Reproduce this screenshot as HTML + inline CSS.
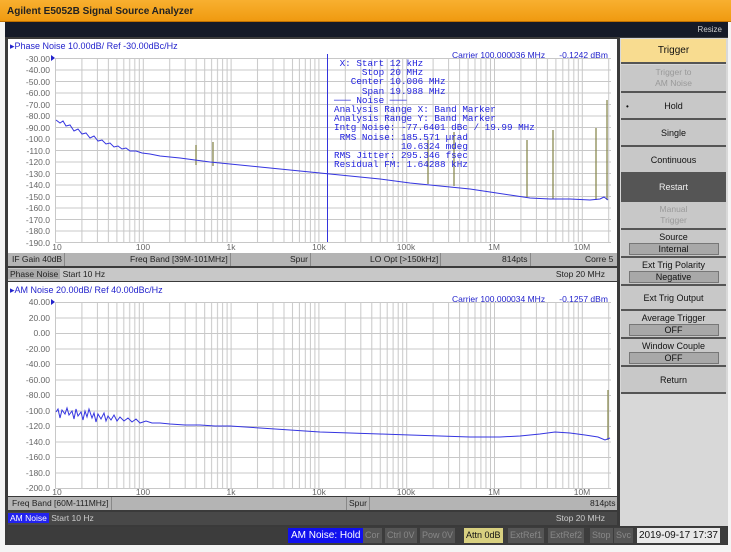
<!DOCTYPE html>
<html><head><meta charset="utf-8"><style>
*{margin:0;padding:0;box-sizing:border-box}
body{width:731px;height:552px;background:#f4f4f4;font-family:"Liberation Sans",sans-serif;position:relative;overflow:hidden;font-size:9px}
.a{position:absolute}
.title{left:0;top:0;width:731px;height:22px;background:linear-gradient(#f8b030,#f09a10);border-bottom:1px solid #c07000}
.title span{position:absolute;left:7px;top:6px;font-size:10px;font-weight:bold;color:#222}
.dark{left:5px;top:22px;width:723px;height:15px;background:#151a28;color:#ccc;font-size:8px;text-align:right;padding-right:6px;line-height:15px}
.frame{left:5px;top:37px;width:723px;height:508px;background:#3a3a3a}
.sb{background:#b4b4b4;color:#222;font-size:8.5px;line-height:13px;height:13px}
.sb span{position:absolute;top:0;border-right:1px solid #888;padding:0 2px}
.btn{position:absolute;left:621px;width:105px;background:#c8c8c8;border-bottom:2px solid #555;text-align:center;font-size:9px;color:#111;display:flex;flex-direction:column;justify-content:center;align-items:center}
.sub{width:90px;background:#a8a8a8;border:1px solid #777;line-height:10px;margin-top:1px}
.ann{font-family:"Liberation Mono",monospace;font-size:9.3px;color:#2222dd;line-height:9.2px;white-space:pre;left:334px;top:59px}
.bl{color:#2222cc}
</style></head><body>
<div class="a title"><span>Agilent E5052B Signal Source Analyzer</span></div>
<div class="a dark">Resize</div>
<div class="a frame"></div>
<div class="a" style="left:8px;top:39px;width:609px;height:214px;background:#fff"></div>
<div class="a" style="left:8px;top:282px;width:609px;height:214px;background:#fff"></div>
<div class="a bl" style="left:10px;top:41px;font-size:9px">▸Phase Noise 10.00dB/ Ref -30.00dBc/Hz</div>
<div class="a bl" style="left:452px;top:50px;font-size:8.5px">Carrier 100.000036 MHz &nbsp;&nbsp;&nbsp;&nbsp; -0.1242 dBm</div>
<div class="a bl" style="left:10px;top:285px;font-size:9px">▸AM Noise 20.00dB/ Ref 40.00dBc/Hz</div>
<div class="a bl" style="left:452px;top:294px;font-size:8.5px">Carrier 100.000034 MHz &nbsp;&nbsp;&nbsp;&nbsp; -0.1257 dBm</div>
<svg class="a" style="left:0;top:0" width="731" height="552">
<defs>
<pattern id="pv" x="55" y="0" width="87.8" height="552" patternUnits="userSpaceOnUse">
<g stroke="#c8c8c8" stroke-width="1"><line x1="0.5" y1="0" x2="0.5" y2="552"/><line x1="26.9" y1="0" x2="26.9" y2="552"/><line x1="42.4" y1="0" x2="42.4" y2="552"/><line x1="53.4" y1="0" x2="53.4" y2="552"/><line x1="61.9" y1="0" x2="61.9" y2="552"/><line x1="68.8" y1="0" x2="68.8" y2="552"/><line x1="74.7" y1="0" x2="74.7" y2="552"/><line x1="79.8" y1="0" x2="79.8" y2="552"/><line x1="84.3" y1="0" x2="84.3" y2="552"/></g></pattern>
<pattern id="ph1" x="0" y="58" width="731" height="11.5" patternUnits="userSpaceOnUse"><line x1="0" y1="0.5" x2="731" y2="0.5" stroke="#c8c8c8"/></pattern>
<pattern id="ph2" x="0" y="302" width="731" height="15.5" patternUnits="userSpaceOnUse"><line x1="0" y1="0.5" x2="731" y2="0.5" stroke="#c8c8c8"/></pattern>
</defs>
<rect x="55" y="58" width="556" height="184" fill="url(#pv)"/>
<rect x="55" y="58" width="556" height="185" fill="url(#ph1)"/>
<rect x="55" y="302" width="556" height="186" fill="url(#pv)"/>
<rect x="55" y="302" width="556" height="187" fill="url(#ph2)"/>
<g font-size="8.5" fill="#666" text-anchor="end" font-family="Liberation Sans">
<text x="50" y="62">-30.00</text><text x="50" y="73">-40.00</text><text x="50" y="85">-50.00</text><text x="50" y="96">-60.00</text><text x="50" y="108">-70.00</text><text x="50" y="119">-80.00</text><text x="50" y="131">-90.00</text><text x="50" y="142">-100.0</text><text x="50" y="154">-110.0</text><text x="50" y="165">-120.0</text><text x="50" y="177">-130.0</text><text x="50" y="188">-140.0</text><text x="50" y="200">-150.0</text><text x="50" y="211">-160.0</text><text x="50" y="223">-170.0</text><text x="50" y="234">-180.0</text><text x="50" y="246">-190.0</text>
<text x="50" y="305">40.00</text><text x="50" y="321">20.00</text><text x="50" y="336">0.00</text><text x="50" y="352">-20.00</text><text x="50" y="367">-40.00</text><text x="50" y="383">-60.00</text><text x="50" y="398">-80.00</text><text x="50" y="414">-100.0</text><text x="50" y="429">-120.0</text><text x="50" y="445">-140.0</text><text x="50" y="460">-160.0</text><text x="50" y="476">-180.0</text><text x="50" y="491">-200.0</text>
</g>
<g font-size="8.5" fill="#666" text-anchor="middle">
<text x="57" y="250">10</text><text x="143" y="250">100</text><text x="231" y="250">1k</text><text x="319" y="250">10k</text><text x="406" y="250">100k</text><text x="494" y="250">1M</text><text x="582" y="250">10M</text>
<text x="57" y="495">10</text><text x="143" y="495">100</text><text x="231" y="495">1k</text><text x="319" y="495">10k</text><text x="406" y="495">100k</text><text x="494" y="495">1M</text><text x="582" y="495">10M</text>
</g>
<path d="M51 55l4 3-4 3z M51 299l4 3-4 3z" fill="#2222cc"/>
<line x1="327.5" y1="54" x2="327.5" y2="242" stroke="#3333dd"/>
<g stroke="#8a8a50" stroke-width="1.3">
<line x1="196" y1="145" x2="196" y2="165"/><line x1="213" y1="142" x2="213" y2="166"/>
<line x1="428" y1="140" x2="428" y2="184"/><line x1="454" y1="132" x2="454" y2="186"/>
<line x1="527" y1="140" x2="527" y2="197"/><line x1="553" y1="130" x2="553" y2="199"/>
<line x1="596" y1="128" x2="596" y2="200"/><line x1="607" y1="100" x2="607" y2="200"/>
<line x1="608" y1="390" x2="608" y2="440"/>
</g>
<polyline fill="none" stroke="#3535e0" stroke-width="1" points="56,120 60,123 63,121 66,126 70,125 74,131 78,129 82,134 86,133 90,138 94,136 98,141 102,140 106,144 110,143 114,147 118,146 122,149 126,148 130,151 136,151 142,153 150,154 160,156 170,157 180,158 195,160 210,162 230,164 260,167 290,170 320,173 350,176 380,179 410,183 440,186 470,189 490,192 510,195 530,198 550,199 570,199 590,200 600,199 604,197 608,200"/>
<polyline fill="none" stroke="#3535e0" stroke-width="1" points="56,412 58,409 60,418 62,410 65,414 67,408 69,415 72,411 74,419 76,409 78,416 81,412 83,420 85,411 87,417 89,409 92,418 94,413 96,422 98,414 101,419 104,413 106,421 108,416 111,420 114,415 117,421 120,417 124,421 128,418 132,422 136,419 140,423 146,421 152,423 160,423 170,424 185,425 200,425 215,426 230,426 260,428 290,430 320,432 350,433 380,434 410,435 440,436 470,437 500,437 520,436 540,434 555,432 570,433 585,435 598,437 605,440 610,438"/>
</svg>
<div class="a ann"> X: Start 12 kHz
     Stop 20 MHz
   Center 10.006 MHz
     Span 19.988 MHz
─── Noise ───
Analysis Range X: Band Marker
Analysis Range Y: Band Marker
Intg Noise: -77.6401 dBc / 19.99 MHz
 RMS Noise: 185.571 µrad
            10.6324 mdeg
RMS Jitter: 295.346 fsec
Residual FM: 1.64288 kHz</div>
<div class="a sb" style="left:8px;top:253px;width:609px"><span style="left:2px">IF Gain 40dB</span><span style="left:120px">Freq Band [39M-101MHz]</span><span style="left:280px">Spur</span><span style="left:360px">LO Opt [&gt;150kHz]</span><span style="left:492px">814pts</span><span style="left:575px;border:none">Corre 5</span></div>
<div class="a" style="left:8px;top:268px;width:609px;height:13px;background:#c8c8c8;font-size:8.5px;line-height:13px;color:#222"><span style="background:#aaa;padding:0 2px">Phase Noise</span> Start 10 Hz<span style="position:absolute;right:12px">Stop 20 MHz</span></div>
<div class="a sb" style="left:8px;top:497px;width:609px"><span style="left:2px">Freq Band [60M-111MHz]</span><span style="left:338px;border-left:1px solid #888">Spur</span><span style="left:580px;border:none">814pts</span></div>
<div class="a" style="left:8px;top:512px;width:609px;height:13px;background:#484848;font-size:8.5px;line-height:13px;color:#ccc"><span style="background:#2222ee;color:#fff;padding:0 2px">AM Noise</span> Start 10 Hz<span style="position:absolute;right:12px">Stop 20 MHz</span></div>
<div class="a" style="left:8px;top:527px;width:719px;height:17px;background:#3c3c3c;font-size:9px;line-height:15px">
<span class="a" style="left:280px;top:1px;background:#1010ee;color:#fff;padding:0 3px;font-size:10px">AM Noise: Hold</span>
<span class="a" style="left:355px;top:1px;color:#888;background:#555;padding:0 2px">Cor</span>
<span class="a" style="left:377px;top:1px;color:#888;background:#555;padding:0 2px">Ctrl 0V</span>
<span class="a" style="left:412px;top:1px;color:#888;background:#555;padding:0 2px">Pow 0V</span>
<span class="a" style="left:456px;top:1px;color:#111;background:#d8d080;padding:0 2px">Attn 0dB</span>
<span class="a" style="left:500px;top:1px;color:#888;background:#555;padding:0 2px">ExtRef1</span>
<span class="a" style="left:540px;top:1px;color:#888;background:#555;padding:0 2px">ExtRef2</span>
<span class="a" style="left:582px;top:1px;color:#888;background:#555;padding:0 2px">Stop</span>
<span class="a" style="left:606px;top:1px;color:#888;background:#555;padding:0 2px">Svc</span>
<span class="a" style="left:629px;top:1px;color:#111;background:#e8e8e8;padding:0 2px;font-size:10px">2019-09-17 17:37</span>
</div>
<div class="a" style="left:620px;top:38px;width:108px;height:488px;background:#d8d8d8"></div>
<div class="btn" style="top:39px;height:25px;background:#f8dc90;font-size:10px">Trigger</div>
<div class="btn" style="top:65px;height:28px;color:#999;font-size:8.5px;line-height:11px">Trigger to<br>AM Noise</div>
<div class="btn" style="top:93px;height:27px">Hold<span style="position:absolute;left:5px;top:9px;font-size:8px">•</span></div>
<div class="btn" style="top:120px;height:27px">Single</div>
<div class="btn" style="top:147px;height:27px">Continuous</div>
<div class="btn" style="top:174px;height:28px;background:#555;color:#eee">Restart</div>
<div class="btn" style="top:202px;height:28px;color:#999;font-size:8.5px;line-height:11px">Manual<br>Trigger</div>
<div class="btn" style="top:230px;height:28px">Source<div class="sub">Internal</div></div>
<div class="btn" style="top:258px;height:28px">Ext Trig Polarity<div class="sub">Negative</div></div>
<div class="btn" style="top:286px;height:25px">Ext Trig Output</div>
<div class="btn" style="top:311px;height:28px">Average Trigger<div class="sub">OFF</div></div>
<div class="btn" style="top:339px;height:28px">Window Couple<div class="sub">OFF</div></div>
<div class="btn" style="top:367px;height:27px">Return</div>
</body></html>
